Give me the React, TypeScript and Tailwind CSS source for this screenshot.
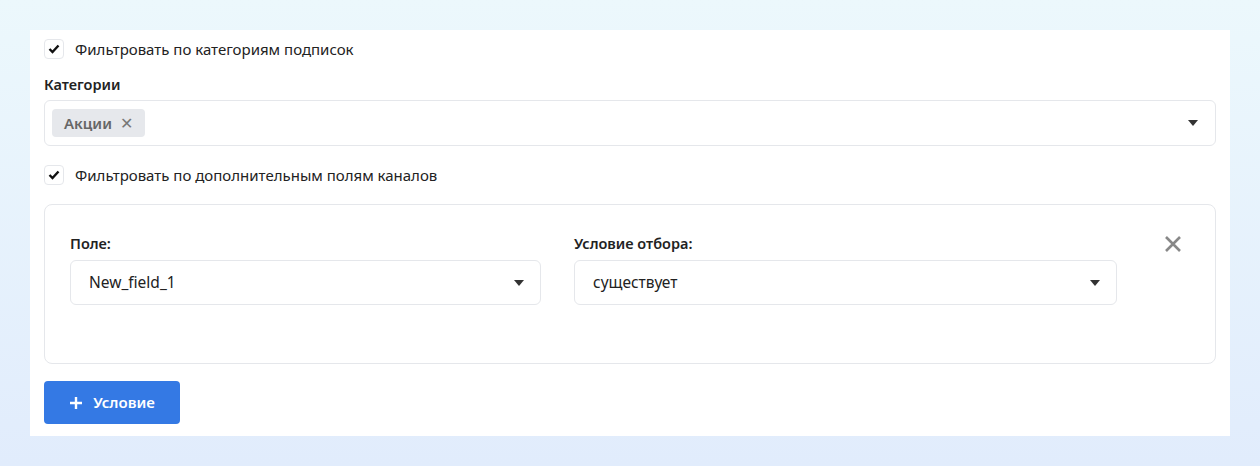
import React from "react";

const Caret = () => (
  <svg width="10" height="6" viewBox="0 0 10 6"><path d="M0 0h10L5 6z" fill="#333" /></svg>
);

const Check = () => (
  <div className="w-5 h-5 rounded border border-gray-200 bg-white flex items-center justify-center">
    <svg width="12" height="10" viewBox="0 0 12 10"><path d="M1.5 5l3 3L10.5 1.5" stroke="#111" strokeWidth="2.4" fill="none" /></svg>
  </div>
);

export default function App() {
  return (
    <div className="w-[1260px] h-[466px] bg-gradient-to-b from-[#ecf8fc] to-[#e1ecfc] pt-[30px] px-[30px]" style={{ fontFamily: '"Noto Sans", sans-serif' }}>
      <div className="bg-white h-[406px] px-[14px] pt-[9px] text-[#222]">
        <div className="flex items-center gap-[11px] h-5">
          <Check />
          <span className="text-[15px]">Фильтровать по категориям подписок</span>
        </div>
        <div className="mt-[15px] text-[14.5px] font-semibold h-5 leading-5">Категории</div>
        <div className="mt-[6px] h-[46px] border border-gray-200 rounded-md flex items-center pl-[7px] pr-[17px]">
          <div className="h-[28px] px-3 rounded bg-[#e6e8ec] flex items-center gap-2 text-[15px] font-semibold text-[#666]">
            Акции <span className="text-[16px] font-normal text-[#777]">✕</span>
          </div>
          <div className="flex-1" />
          <Caret />
        </div>
        <div className="mt-[19px] flex items-center gap-[11px] h-5">
          <Check />
          <span className="text-[15px]">Фильтровать по дополнительным полям каналов</span>
        </div>
        <div className="mt-[19px] h-[160px] border border-gray-200 rounded-lg pl-[25px] pr-[33px] pt-[28px] flex">
          <div className="w-[471px]">
            <div className="text-[14.5px] font-semibold h-5 leading-5">Поле:</div>
            <div className="mt-[7px] h-[45px] border border-gray-200 rounded-md flex items-center justify-between pl-[18px] pr-[16px] text-[15.5px]">
              New_field_1 <Caret />
            </div>
          </div>
          <div className="w-[543px] ml-[33px]">
            <div className="text-[14.5px] font-semibold h-5 leading-5">Условие отбора:</div>
            <div className="mt-[7px] h-[45px] border border-gray-200 rounded-md flex items-center justify-between pl-[18px] pr-[16px] text-[15.5px]">
              существует <Caret />
            </div>
          </div>
          <div className="flex-1 flex justify-end pt-[2px]">
            <svg width="18" height="18" viewBox="0 0 18 18"><path d="M2 2l14 14M16 2L2 16" stroke="#888" strokeWidth="2.6" /></svg>
          </div>
        </div>
        <button className="mt-[17px] h-[43px] w-[136px] rounded bg-[#3479e4] text-white text-[15px] font-semibold flex items-center justify-center gap-[10px]">
          <svg width="14" height="14" viewBox="0 0 14 14"><path d="M7 1v12M1 7h12" stroke="#fff" strokeWidth="2.4" /></svg>
          Условие
        </button>
      </div>
    </div>
  );
}
